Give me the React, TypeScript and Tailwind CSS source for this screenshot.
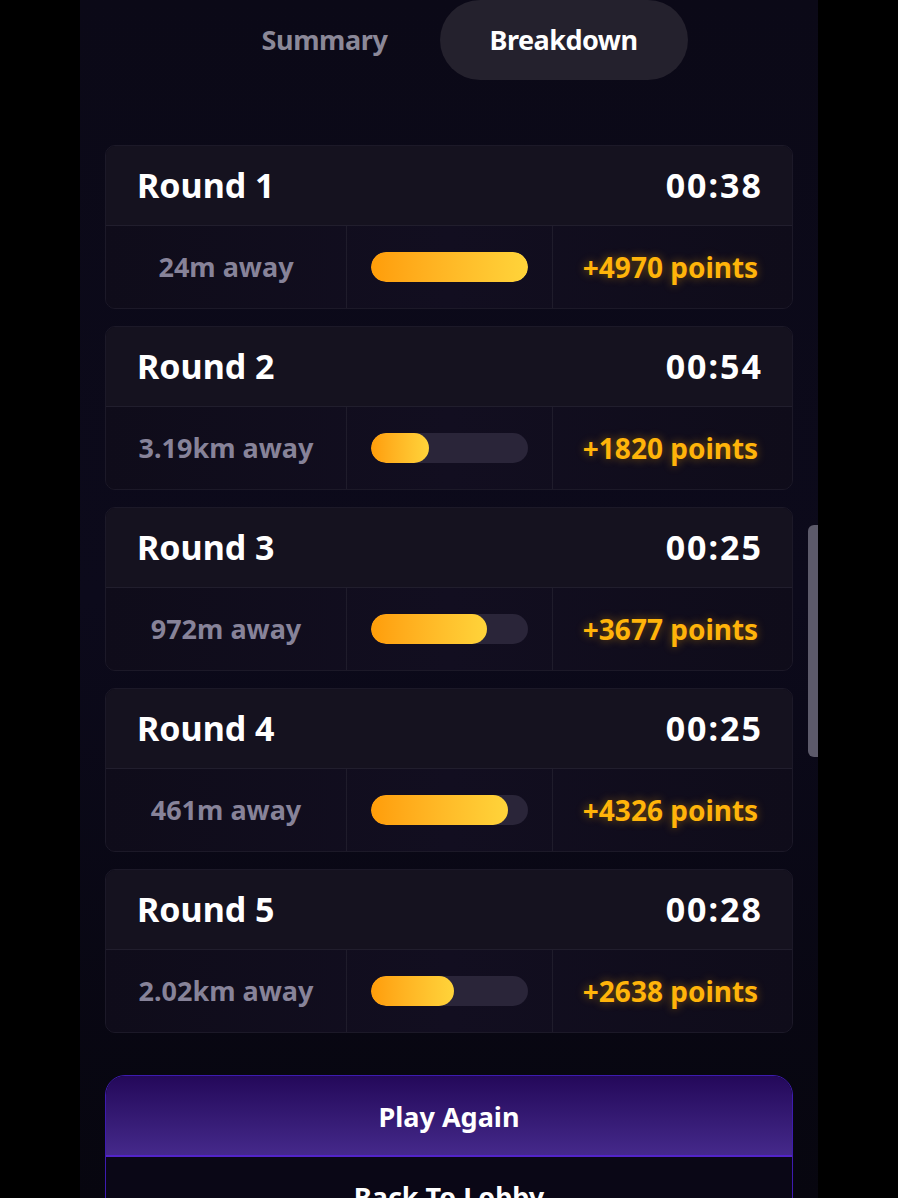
import { clsx } from 'clsx';

const ROUNDS = [
  { round: 1, time: '00:38', distance: '24m away', pct: 100, points: 4970 },
  { round: 2, time: '00:54', distance: '3.19km away', pct: 37, points: 1820 },
  { round: 3, time: '00:25', distance: '972m away', pct: 74, points: 3677 },
  { round: 4, time: '00:25', distance: '461m away', pct: 87, points: 4326 },
  { round: 5, time: '00:28', distance: '2.02km away', pct: 53, points: 2638 },
];

function RoundCard({ round, time, distance, pct, points }: (typeof ROUNDS)[number]) {
  return (
    <div className="rounded-[10px] border border-[#1c1928] overflow-hidden bg-[#0f0c1a]">
      {/* Header */}
      <div className="h-[80px] flex items-center justify-between pl-[31px] pr-[29px] bg-[#15121f] border-b border-[#211e2d]">
        <span className="text-[34px] font-bold text-white">Round {round}</span>
        <span className="text-[34px] font-bold text-white tracking-[2px]">{time}</span>
      </div>

      {/* Stats */}
      <div className="h-[82px] grid grid-cols-[241px_206px_1fr] bg-gradient-to-r from-[#0f0c1a] via-[#120e20] to-[#0f0c1a]">
        <div className="flex items-center justify-center border-r border-[#1f1c2b]">
          <span className="text-[27px] font-bold text-[#878399]">{distance}</span>
        </div>
        <div className="flex items-center justify-center border-r border-[#1f1c2b]">
          <div className="w-[157px] h-[30px] rounded-full bg-[#2a2539] overflow-hidden">
            <div
              className="h-full rounded-full bg-gradient-to-r from-[#ff9d08] to-[#ffd43a]"
              style={{ width: `${pct}%` }}
            />
          </div>
        </div>
        <div className="flex items-center justify-center pr-[4px]">
          <span className="text-[28px] font-bold text-[#ffb40a] [text-shadow:0_0_10px_rgba(255,170,0,0.45)]">
            +{points} points
          </span>
        </div>
      </div>
    </div>
  );
}

export default function App() {
  return (
    <div className="w-[898px] h-[1198px] bg-black overflow-hidden font-['Noto_Sans',sans-serif]">
      <div className="relative w-[738px] h-full ml-[80px] bg-gradient-to-b from-[#0b0917] via-[#0c0a1b] to-[#07060f] px-[25px]">
        {/* Tabs */}
        <div className="flex justify-center gap-[51px] h-[80px] items-center pl-[50px]">
          <button className="w-[128px] text-[27px] font-bold text-[#8b8898] text-center tracking-[-0.4px]">Summary</button>
          <button className="w-[248px] h-[80px] rounded-full bg-[#24212d] text-[27px] font-bold text-white tracking-[-0.5px]">
            Breakdown
          </button>
        </div>

        {/* Rounds */}
        <div className="mt-[65px] flex flex-col gap-[17px]">
          {ROUNDS.map((r) => (
            <RoundCard key={r.round} {...r} />
          ))}
        </div>

        {/* Actions */}
        <div className="mt-[42px] rounded-t-[20px] overflow-hidden border border-[#3d1bb0]">
          <button
            className={clsx(
              'w-full h-[81px] pt-[3px] text-[27px] font-bold text-white',
              'bg-gradient-to-b from-[#24085a] to-[#45298b]',
              'border-b-2 border-[#5224c9]'
            )}
          >
            Play Again
          </button>
          <button className="w-full h-[81px] text-[27px] font-bold text-white bg-[#0a0716]">
            Back To Lobby
          </button>
        </div>

        {/* Scrollbar */}
        <div className="absolute right-0 top-[525px] w-[10px] h-[232px] rounded-l-[6px] bg-[#5c5a6a]" />
      </div>
    </div>
  );
}
